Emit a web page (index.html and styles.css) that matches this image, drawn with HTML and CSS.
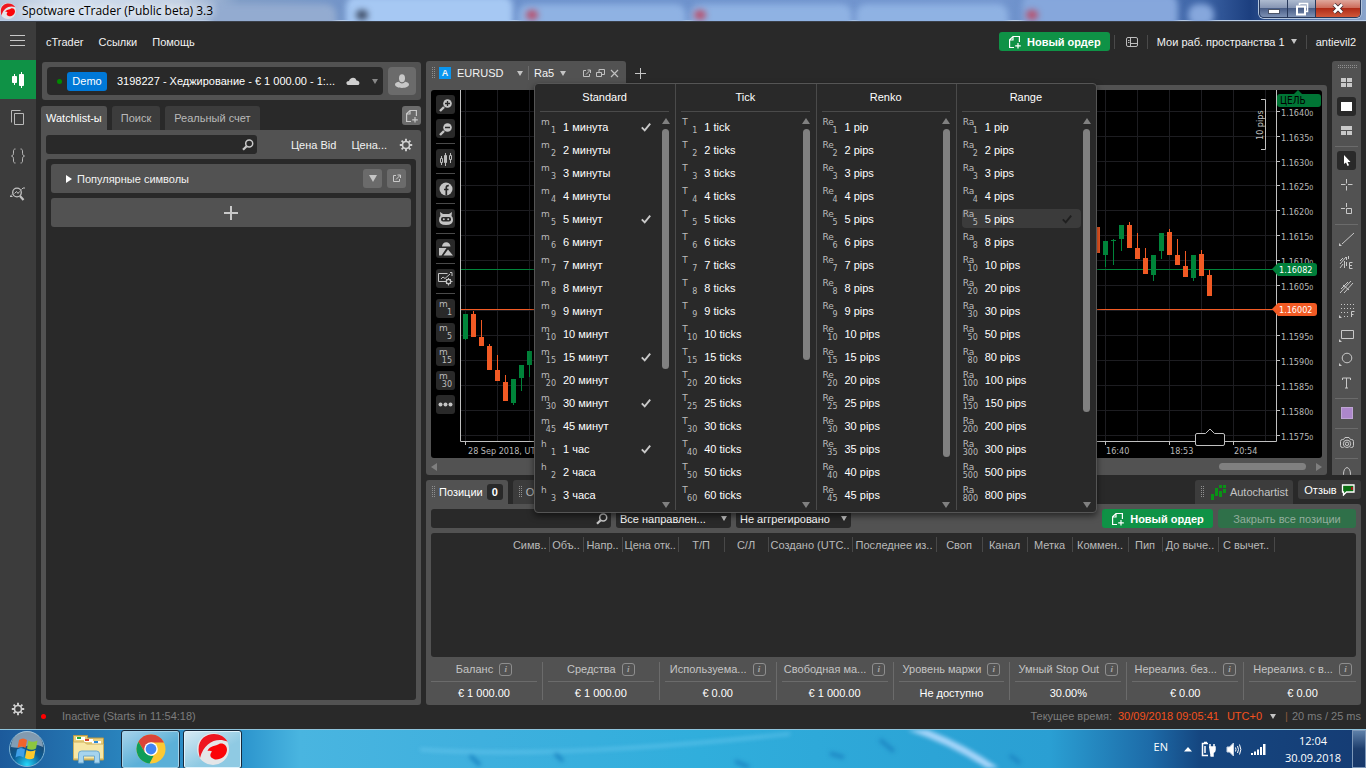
FILE: index.html
```html
<!DOCTYPE html>
<html lang="ru">
<head>
<meta charset="utf-8">
<title>Spotware cTrader (Public beta) 3.3</title>
<link rel="stylesheet" href="styles.css">
</head>
<body>
<svg class="defs" width="0" height="0" aria-hidden="true">
  <defs>
    <symbol id="search" viewBox="0 0 12 12"><circle cx="7.2" cy="4.6" r="3.5" fill="none" stroke="currentColor" stroke-width="1.5"/><path d="M4.6 7.2L1 10.8" stroke="currentColor" stroke-width="2.2"/></symbol>
    <symbol id="gear" viewBox="0 0 14 14"><g stroke="currentColor" fill="none"><circle cx="7" cy="7" r="3.5" stroke-width="1.6"/><path stroke-width="1.9" d="M7 .8v2.4M7 10.8v2.4M.8 7h2.4M10.8 7h2.4M2.6 2.6l1.7 1.7M9.7 9.7l1.7 1.7M2.6 11.4l1.7-1.7M9.7 4.3l1.7-1.7"/></g></symbol>
    <symbol id="newdoc" viewBox="0 0 14 14"><path fill="none" stroke="currentColor" stroke-width="1.2" d="M6 12.5H1.6V4.800L5 1.500h6.400V7M1.600 5H5V1.500M10 8v5.600M7.200 10.800h5.600"/></symbol>
    <symbol id="popout" viewBox="0 0 9 9"><path fill="none" stroke="currentColor" d="M4 1.5H1.5v6h6V5M5.5 1h3v3M8.300 1.200L4 5.500"/></symbol>
    <symbol id="check" viewBox="0 0 10 10"><path fill="none" stroke="currentColor" stroke-width="1.900" d="M.8 5.400l2.900 2.900L9.200 1.600"/></symbol>
    <symbol id="cball" viewBox="0 0 32 32"><circle cx="16" cy="16" r="16" fill="#e4e6e8"/><path fill="#ee1620" d="M3 25C-2 9 7 1 17 1c6 0 11 3 13.500 7.500C20 4 7 9 3 25z"/><path fill="#fb0408" d="M10.500 18C13 12 18 14 23 10.500c4-.5 7 2 7 6.500-.5 6-6 10-12 9.500C13 25 12 22 15 18.500c-1-1-3-1-4.500-.5z"/></symbol>
  </defs>
</svg>

<header class="titlebar">
  <span class="blur-tab t1"></span><span class="blur-tab t2"></span><span class="blur-tab t3"></span><span class="blur-tab t4"></span><span class="blur-tab t5"></span><span class="blur-tab t6"></span><span class="blur-tab t7"></span>
  <span class="blob b1"></span><span class="blob red b2"></span><span class="blob red b3"></span><span class="blob red b4"></span>
  <svg class="app-logo" width="16" height="16"><use href="#cball"/></svg>
  <span class="app-title">Spotware cTrader (Public beta) 3.3</span>
  <div class="win-buttons">
    <button class="win" aria-label="Свернуть"><svg width="14" height="12"><rect x="1.5" y="6.5" width="11" height="4" fill="#fff" stroke="#4c5568"/></svg></button>
    <button class="win" aria-label="Развернуть"><svg width="14" height="14" fill="none" stroke="#fff" stroke-width="1.6"><path d="M4.5 3V1.5h8v8H11"/><path d="M2 4.5h8v8H2z" stroke-width="2"/></svg></button>
    <button class="win close" aria-label="Закрыть"><svg width="12" height="11"><path d="M2 1.5l8 8M10 1.5l-8 8" stroke="#3d2a30" stroke-width="4.2"/><path d="M2 1.5l8 8M10 1.5l-8 8" stroke="#fff" stroke-width="2.6"/></svg></button>
  </div>
</header>

<div class="app">
  <nav class="rail">
    <button class="rail-btn menu" aria-label="Меню"><svg width="16" height="12" stroke="#c8c8c8"><path d="M0 .5h15M0 5.5h15M0 10.5h15"/></svg></button>
    <button class="rail-btn active" aria-label="Торговля"><svg width="14" height="18" fill="#fff" stroke="#fff"><path d="M3.5 3v11M10.5 1v16" stroke-width="1"/><path d="M1.5 5.500h4v6h-4zM8.500 3.500h4v11h-4z"/></svg></button>
    <button class="rail-btn" aria-label="Копирование"><svg width="14" height="16" fill="none" stroke="#b9b9b9"><path d="M3.500 3.500h9v11h-9zM.5 12.500V.5h9"/></svg></button>
    <button class="rail-btn" aria-label="Автоматизация"><svg width="14" height="16" fill="none" stroke="#b9b9b9"><path d="M4.500 1C2.500 1 2.500 2 2.500 4c0 3-.5 3.500-2 4 1.500.5 2 1 2 4 0 2 0 3 2 3M9.500 1c2 0 2 1 2 3 0 3 .5 3.500 2 4-1.500.5-2 1-2 4 0 2 0 3-2 3"/></svg></button>
    <button class="rail-btn" aria-label="Анализ"><svg width="16" height="14" fill="none" stroke="#c2c2c2"><circle cx="7" cy="5.500" r="4.300" stroke-width="1.300"/><path d="M10 9l3.500 4" stroke-width="2.200"/><path d="M4.500 6.500l2-2 1.500 2 1.500-2M0 9.500h2.500M11.500 2.500l1.500-1.500h2M0 9.500l2-2"/></svg></button>
    <button class="rail-btn bottom" aria-label="Настройки"><svg width="14" height="14" color="#d0d0d0"><use href="#gear"/></svg></button>
  </nav>

  <div class="main">
    <div class="menubar">
      <a href="#">cTrader</a><a href="#">Ссылки</a><a href="#">Помощь</a>
      <div class="menubar-right">
        <button class="btn-green"><svg width="14" height="14"><use href="#newdoc"/></svg>Новый ордер</button>
        <span class="vsep"></span>
        <button class="plain layout" aria-label="Панели"><svg width="12" height="12" fill="none" stroke="#bdbdbd"><rect x=".5" y="1.500" width="11" height="9" rx="1.500"/><path d="M4.500 2v8M4.500 7.500h7M2 4.500h1.500M2 6.500h1.500"/></svg></button>
        <span class="vsep"></span>
        <button class="plain workspace">Мои раб. пространства 1<i class="tri"></i></button>
        <span class="vsep"></span>
        <a href="#" class="user">antievil2</a>
      </div>
    </div>

    <div class="content">
      <aside class="left">
        <div class="account">
          <button class="account-box"><i class="dot green"></i><b class="demo">Demo</b><span class="acc-text">3198227 - Хеджирование - € 1 000.00 - 1:...</span>
            <svg width="14" height="8" fill="#cfcfcf"><path d="M2 8C-.5 7 0 4 3 4c.5-3 6-5 7.500-.5C13 3.500 14.500 6 12.500 8z"/></svg><i class="tri dim"></i></button>
          <button class="avatar" aria-label="Профиль"><svg width="14" height="15" fill="#c8c8c8"><ellipse cx="7" cy="4.300" rx="3" ry="4"/><path d="M0 10.500C0 8.500 2.500 8 4 7.800c1.500 2.200 4.500 2.200 6 0 1.500.2 4 .7 4 2.700 0 4.500-14 4.500-14 0z"/></svg></button>
        </div>
        <div class="tabs">
          <button class="tab on">Watchlist-ы</button><button class="tab">Поиск</button><button class="tab">Реальный счет</button>
          <button class="sq light new-list" aria-label="Новый список"><svg width="14" height="14"><use href="#newdoc"/></svg></button>
        </div>
        <section class="watch">
          <div class="watch-head">
            <label class="search"><input type="text" aria-label="Поиск символа"><svg width="12" height="12"><use href="#search"/></svg></label>
            <span class="bid">Цена Bid</span><span class="ask">Цена...</span>
            <button class="plain" aria-label="Настройки списка"><svg width="14" height="14" color="#d0d0d0"><use href="#gear"/></svg></button>
          </div>
          <div class="watch-body">
            <div class="group"><i class="tri east"></i><span>Популярные символы</span>
              <button class="sq light" aria-label="Меню списка"><i class="tri"></i></button>
              <button class="sq light" aria-label="Открепить"><svg width="9" height="9"><use href="#popout"/></svg></button></div>
            <button class="add" aria-label="Добавить"><svg width="16" height="16" stroke="#c9c9c9" stroke-width="2"><path d="M8 1v14M1 8h14"/></svg></button>
          </div>
        </section>
      </aside>

      <div class="workarea">
        <div class="upper">
          <section class="chart-area">
            <div class="chart-tabs">
              <div class="chart-tab">
                <i class="grip"></i><b class="link-a">A</b>
                <button class="plain sym">EURUSD<i class="tri"></i></button><span class="vsep"></span>
                <button class="plain period">Ra5<i class="tri"></i></button>
                <span class="tab-tools">
                  <button class="plain" aria-label="Открепить"><svg width="9" height="9"><use href="#popout"/></svg></button>
                  <button class="plain" aria-label="Дублировать"><svg width="9" height="9" fill="none" stroke="currentColor"><path d="M3 3V.5h5.500v5H6M.5 3.500h5v4h-5z"/></svg></button>
                  <button class="plain" aria-label="Закрыть"><svg width="9" height="9" stroke="currentColor" stroke-width="1.200"><path d="M1 1l7 7M8 1L1 8"/></svg></button>
                </span>
              </div>
              <button class="plain plus" aria-label="Новая вкладка"><svg width="11" height="11" stroke="#c6c6c6"><path d="M5.500 0v11M0 5.500h11"/></svg></button>
            </div>
            <div class="chart-frame">
              <div class="chart">
                <div class="chart-tools">
                  <button class="sq" aria-label="Увеличить"><svg width="14" height="14"><circle cx="8.500" cy="5.500" r="4.300" fill="#c4c4c4"/><path d="M5 9l-4 4" stroke="#c4c4c4" stroke-width="2.400"/><path d="M8.500 3v5M6 5.500h5" stroke="#292929" stroke-width="1.300"/></svg></button>
                  <button class="sq" aria-label="Уменьшить"><svg width="14" height="14"><circle cx="8.500" cy="5.500" r="4.300" fill="#c4c4c4"/><path d="M5 9l-4 4" stroke="#c4c4c4" stroke-width="2.400"/><path d="M6 5.500h5" stroke="#292929" stroke-width="1.300"/></svg></button>
                  <hr>
                  <button class="sq" aria-label="Тип графика"><svg width="14" height="14" fill="none" stroke="#bcbcbc"><path d="M2.500 4v2M2.500 11v2M6.500 1v13M11.500 1v2M11.500 8v3M1.500 6.500h2v4h-2zM10.500 3.500h2v4h-2z"/><path fill="#bcbcbc" d="M5.500 3.500h2v7h-2z"/></svg></button>
                  <hr>
                  <button class="sq" aria-label="Facebook"><svg width="14" height="14"><circle cx="7" cy="7" r="6.500" fill="#c4c4c4"/><path d="M7.300 13.500V5.500q0-2 2.500-1.800M5 7.500h4.500" fill="none" stroke="#292929" stroke-width="1.700"/></svg></button>
                  <hr>
                  <button class="sq" aria-label="Роботы"><svg width="14" height="13"><path fill="#c4c4c4" d="M1 0l3 2h6l3-2-.5 4q1.500 1 1.500 4 0 5-7 5T0 8q0-3 1.500-4z"/><rect x="2" y="5" width="10" height="4.500" rx="2" fill="#292929"/><circle cx="4.800" cy="7.200" r="1" fill="#c4c4c4"/><circle cx="9.200" cy="7.200" r="1" fill="#c4c4c4"/></svg></button>
                  <hr>
                  <button class="sq" aria-label="Объекты"><svg width="14" height="14" fill="#c4c4c4"><path d="M3 4.500a4 4 0 0 1 8.500 0zM0 6h7.500L2.500 13.500H0zM9 7.500l5 6H4.500z"/></svg></button>
                  <hr>
                  <button class="sq" aria-label="Настройки графика"><svg width="15" height="14" fill="none" stroke="#c4c4c4"><path d="M7 9.500H.5v-8h9M3 7l2-2 2 1.500L12 2M12 .5h2V4"/><circle cx="10.500" cy="9.500" r="2.200" stroke-width="1.300"/><path d="M10.500 6v1M10.500 12v1.500M7 9.500h1M13 9.500h1.500M8 7l1 1M13 7l-1 1M8 12l1-1M13 12l-1-1"/></svg></button>
                  <hr>
                  <button class="sq unit">m<sub>1</sub></button>
                  <button class="sq unit">m<sub>5</sub></button>
                  <button class="sq unit">m<sub>15</sub></button>
                  <button class="sq unit">m<sub>30</sub></button>
                  <button class="sq" aria-label="Ещё"><svg width="15" height="5" fill="#c4c4c4"><circle cx="2.500" cy="2.500" r="2"/><circle cx="7.500" cy="2.500" r="2"/><circle cx="12.500" cy="2.500" r="2"/></svg></button>
                </div>
                <svg class="plot" viewBox="460 90 862 368" preserveAspectRatio="xMaxYMin meet" role="img" aria-label="График EURUSD">
                  <path class="grid" id="grid"/>
                  <path stroke="#00843a" d="M460 269.500H1274"/>
                  <path stroke="#f15a24" d="M460 309.500H1274"/>
                  <g id="candles"></g>
                  <path class="axis" d="M460.500 90V441.500H1276.500V90"/>
                  <path class="axis" id="ticks"/>
                  <g class="tick-text" id="prices"></g>
                  <g class="tick-text"><text x="468" y="454">28 Sep 2018, UTC</text><text x="1106" y="454">16:40</text><text x="1170" y="454">18:53</text><text x="1234" y="454">20:54</text></g>
                  <path class="axis" d="M1261 99.500h4.500v50H1261"/>
                  <text class="pips" transform="translate(1263 140) rotate(-90)">10 pips</text>
                  <path fill="#007535" d="M1298 90l4 4h16q3 0 3 3v7q0 3-3 3h-38q-3 0-3-3v-7q0-3 3-3h14z"/>
                  <text class="target" x="1280" y="104">ЦЕЛЬ</text>
                  <path fill="#007f3a" d="M1272 269l6-6h36q3 0 3 3v7q0 3-3 3h-36z"/>
                  <text class="tag" x="1279" y="273">1.16082</text>
                  <path fill="#f15a24" d="M1272 309l6-6h36q3 0 3 3v7q0 3-3 3h-36z"/>
                  <text class="tag" x="1279" y="313">1.16002</text>
                  <path fill="#000" stroke="#c0c0c0" d="M1195.500 435q0-1.500 1.500-1.500h8.500l4.500-4.500 4.500 4.500h8.500q1.500 0 1.500 1.500v9q0 1.500-1.500 1.500h-26q-1.500 0-1.500-1.500z"/>
                </svg>
              </div>
              <div class="hscroll"><i class="arrow-l"></i><i class="thumb"></i><i class="arrow-r"></i></div>
            </div>
          </section>

          <div class="draw-tools">
            <i class="grip-h"></i>
            <button aria-label="Мозаика"><svg width="12" height="10" fill="#c9c9c9"><path d="M0 0h5v4H0zM6 0h5v4H6zM0 5h5v4H0zM6 5h5v4H6z"/></svg></button>
            <button class="on" aria-label="Одно окно"><svg width="12" height="10"><rect width="11" height="9" fill="#fff"/></svg></button>
            <button aria-label="Свободно"><svg width="12" height="10" fill="#c9c9c9"><path d="M0 0h11v4H0zM0 5h5v4H0zM6 5h5v4H6z"/></svg></button>
            <hr>
            <button class="on" aria-label="Курсор"><svg width="8" height="12" fill="#fff"><path d="M1 0v9l2-1.500L4.500 11l1.500-.7L4.600 7H7.500z"/></svg></button>
            <button aria-label="Перекрестие"><svg width="12" height="12" stroke="#c9c9c9"><path d="M5.500 0v4.500M5.500 7v4.500M0 5.500h4.500M7 5.500h4.500"/></svg></button>
            <button aria-label="Перекрестие с объектом"><svg width="12" height="12" stroke="#c9c9c9" fill="none"><path d="M5.500 0v4M0 5.500h4M5.500 5.500h5v5h-5z"/></svg></button>
            <hr>
            <button aria-label="Линия"><svg width="16" height="16" stroke="#c9c9c9"><path d="M3 13L15 2"/><path d="M0 12v3h3z" fill="#c9c9c9" stroke="none"/></svg></button>
            <button aria-label="Волны"><svg width="15" height="15" stroke="#c9c9c9" fill="none"><path d="M1 9l6-7M1 13l3-4M5.500 6v7M7.500 2v3M7.500 7v4M9.500 4V1M1 6l3-3M13.500 7.500h-3v6h3M10.500 10.500h2.500"/></svg></button>
            <button aria-label="Вилы"><svg width="14" height="14" stroke="#c9c9c9"><path d="M0 13L11 1M4 13L13 3M1 9l7-7M3 5l6 5"/></svg></button>
            <button aria-label="Фибоначчи"><svg width="16" height="16" stroke="#c9c9c9" fill="none"><path stroke-dasharray="1 2" d="M2 1.500h13M2 5.500h13M2 9.500h8M5 13.500h6"/><path d="M12.500 14V8.500h3M12.500 11.500h2"/><path d="M0 12v3h3z" fill="#c9c9c9" stroke="none"/></svg></button>
            <button aria-label="Прямоугольник"><svg width="16" height="16" stroke="#c9c9c9" fill="none"><path d="M2.500 3.500h12v8h-12z"/><path d="M0 12v3h3z" fill="#c9c9c9" stroke="none"/></svg></button>
            <button aria-label="Эллипс"><svg width="16" height="16" stroke="#c9c9c9" fill="none"><circle cx="8" cy="7" r="4.800"/><path d="M0 12v3h3z" fill="#c9c9c9" stroke="none"/></svg></button>
            <button aria-label="Текст"><svg width="10" height="12" stroke="#c9c9c9" fill="none"><path d="M.5 3V1h8v2M4.500 1v10M3 11h3"/></svg></button>
            <hr>
            <button aria-label="Цвет"><i class="swatch"></i></button>
            <hr>
            <button aria-label="Снимок"><svg width="14" height="12" stroke="#c9c9c9" fill="none"><path d="M3.500 10.500h-1Q.5 10.500.5 8.500v-4Q.5 2.500 2.500 2.500h1l1.500-2h4l1.500 2h1q2 0 2 2v4q0 2-2 2h-1"/><circle cx="7" cy="6.800" r="3.700"/><circle cx="7" cy="6.800" r="1.700"/></svg></button>
            <hr>
            <button aria-label="Оповещение"><svg width="12" height="14" stroke="#c9c9c9" fill="none"><path d="M1 12.500q1.500-1 1.500-4Q2.500 2.500 6 1.500q3.500 1 3.500 7 0 3 1.500 4"/></svg></button>
          </div>
        </div>

        <section class="lower">
          <div class="lower-tabs">
            <button class="tab on"><i class="grip"></i>Позиции<b class="count">0</b></button>
            <button class="tab"><i class="grip"></i>Ордера</button>
            <button class="tab auto"><i class="grip"></i><svg width="15" height="15" fill="#0a9216"><path d="M0 9h3v6H0zM4 3h3v8H4zM8 6h3v6H8zM8 0h3v3H8zM12 0h3v3h-3zM12 4h3v4h-3z"/></svg>Autochartist</button>
            <button class="feedback">Отзыв<svg width="14" height="12"><path d="M1.500 1h11.500v7H5.500l-3 3V8h-1z" fill="#0a6e12" stroke="#fff" stroke-width="1.300"/><path d="M11 3v3" stroke="#a01818" stroke-width="2"/></svg></button>
          </div>
          <div class="lower-panel">
            <div class="filters">
              <label class="search"><input type="text" aria-label="Поиск позиции"><svg width="12" height="12"><use href="#search"/></svg></label>
              <label class="select"><select aria-label="Направление"><option>Все направлен...</option></select><i class="tri"></i></label>
              <label class="select"><select aria-label="Агрегация"><option>Не аггрегировано</option></select><i class="tri"></i></label>
              <button class="btn-green push"><svg width="14" height="14"><use href="#newdoc"/></svg>Новый ордер</button>
              <button class="btn-green off">Закрыть все позиции</button>
            </div>
            <div class="table-box">
              <table>
                <colgroup><col class="w118"><col class="w34"><col class="w39"><col class="w56"><col class="w46"><col class="w44"><col class="w84"><col class="w84"><col class="w46"><col class="w45"><col class="w45"><col class="w56"><col class="w34"><col class="w56"><col class="w56"><col></colgroup>
                <thead><tr><th>Симв..</th><th>Объ..</th><th>Напр..</th><th>Цена отк..</th><th>Т/П</th><th>С/Л</th><th>Создано (UTC..</th><th>Последнее из..</th><th>Своп</th><th>Канал</th><th>Метка</th><th>Коммен..</th><th>Пип</th><th>До выче..</th><th>С вычет..</th><td></td></tr></thead>
              </table>
            </div>
            <dl class="stats">
              <div><dt>Баланс<i>i</i></dt><dd>€ 1 000.00</dd></div>
              <div><dt>Средства<i>i</i></dt><dd>€ 1 000.00</dd></div>
              <div><dt>Используема...<i>i</i></dt><dd>€ 0.00</dd></div>
              <div><dt>Свободная ма...<i>i</i></dt><dd>€ 1 000.00</dd></div>
              <div><dt>Уровень маржи<i>i</i></dt><dd>Не доступно</dd></div>
              <div><dt>Умный Stop Out<i>i</i></dt><dd>30.00%</dd></div>
              <div><dt>Нереализ. без...<i>i</i></dt><dd>€ 0.00</dd></div>
              <div><dt>Нереализ. с в...<i>i</i></dt><dd>€ 0.00</dd></div>
            </dl>
          </div>
        </section>
        <div class="period-menu" id="period-menu"></div>
      </div>
    </div>

    <footer class="status">
      <i class="dot red"></i><span>Inactive (Starts in 11:54:18)</span>
      <span class="now">Текущее время:</span><span class="hot">30/09/2018 09:05:41</span>
      <button class="plain utc">UTC+0<i class="tri"></i></button>
      <span class="ping"><span class="bar">|</span>20 ms / 25 ms</span>
    </footer>
  </div>
</div>

<div class="taskbar">
  <svg class="streaks" viewBox="0 0 1366 39" preserveAspectRatio="none" fill="none"><path d="M900-6Q960 12 1010 52" stroke="#a9d6fa" stroke-width="7"/><path d="M420 20Q560 30 790 4" stroke="#6cc9ef" stroke-width="2"/><path d="M120 50L165-10" stroke="#4aa5d4" stroke-width="6"/><path d="M470 26l10 10M555 24l8 8M735 32l14 6M880 10l14 12M1010 26l10 8M830 24l14 4" stroke="#1d87c4" stroke-width="4"/></svg>
  <button class="start" aria-label="Пуск"><svg width="38" height="38"><defs><radialGradient id="orb" cx=".5" cy=".95" r=".9"><stop offset="0" stop-color="#25d8fa"/><stop offset=".45" stop-color="#0b5c96"/><stop offset="1" stop-color="#223f5e"/></radialGradient></defs><circle cx="19" cy="19" r="17.500" fill="url(#orb)" stroke="#7db4d6"/><path fill="#b8cbd8" opacity=".65" d="M3 17a16 16 0 0 1 32 0q-8-4-16-1T3 17z"/><path fill="#f0642c" d="M11 10q4-3 8 0l-1.500 8q-4-3-8 0z"/><path fill="#8cc63f" d="M20.500 10.500q4 2.500 9 0L28 18.500q-4 2.500-9 0z"/><path fill="#3f9fe8" d="M9 19.500q4-3 8 0l-1.500 8q-4-3-8 0z"/><path fill="#fcc92c" d="M18.500 20q4 2.500 9 0L26 28q-4 2.500-9 0z"/></svg></button>
  <button class="task" aria-label="Проводник"><svg width="34" height="32"><path fill="#e9cf7c" stroke="#b99a45" d="M1.500 5V2.500h14V5h16v22h-30z"/><path fill="#fff" d="M4 4h9v3H4zM12 6h9v3h-9zM20 8h9v3h-9z"/><path fill="#23a83c" d="M5 4h4v2H5z"/><path fill="#d8402a" d="M13 6h4v2h-4z"/><path fill="#2a8ad8" d="M22 8h4v2h-4z"/><path fill="#f7e7a6" stroke="#cdb05c" d="M1.500 9h11l2 2h17v15h-30z"/><path fill="#a6d4ee" stroke="#6fa8cc" d="M6.500 30V21q0-3 3-3h15q3 0 3 3v9h-5v-7h-11v7z"/></svg></button>
  <button class="task open" aria-label="Chrome"><svg width="30" height="30"><circle cx="15" cy="15" r="14.500" fill="#fcc934"/><path fill="#db4437" d="M2.400 7.800A14.500 14.500 0 0 1 28 8.500H15L8.700 18z"/><path fill="#0f9d58" d="M2.400 7.800L9 18.500l6 3.500h2.500L13.500 29.500A14.500 14.500 0 0 1 2.400 7.800z"/><circle cx="15" cy="15" r="6.800" fill="#fff"/><circle cx="15" cy="15" r="5.400" fill="#4285f4"/></svg></button>
  <button class="task open front" aria-label="cTrader"><svg width="32" height="32"><use href="#cball"/></svg></button>
  <div class="tray">
    <span class="lang">EN</span>
    <svg width="8" height="5" fill="#fff"><path d="M4 0l4 4.500H0z"/></svg>
    <svg width="16" height="17" fill="none" stroke="#fff" stroke-width="1.500"><path d="M7 14.500H1.500v-12H7M3 1.500h3M4 5v7"/><path fill="#fff" d="M8 6h6v3q0 2-2 2.500V15H9.500M9 3v3M13 3v3M10 11V8"/></svg>
    <svg width="16" height="15"><path fill="#fff" stroke="#c8d4e4" d="M1 5h2.500l4-4v13l-4-4H1z"/><path fill="none" stroke="#fff" d="M9.500 5.500q1 2 0 4M11.500 4q2 3.500 0 7M13.500 2.500q2.700 5 0 10"/></svg>
    <svg width="16" height="13" fill="#fff"><path d="M0 10h2v2H0zM3 8.500h2V12H3zM6 6.500h2V12H6zM9 4h2v8H9zM12 1h2.500v11H12z"/></svg>
    <time class="clock">12:04<br>30.09.2018</time>
  </div>
  <button class="show-desktop" aria-label="Свернуть все окна"></button>
</div>
<script src="app.js"></script>
</body>
</html>
```
FILE: styles.css
```css
* { box-sizing: border-box; }
body { margin: 0; height: 100vh; display: flex; flex-direction: column; overflow: hidden; background: #292929; color: #f2f2f2; font: 11px/14px "Liberation Sans", Arial, sans-serif; }
button { font: inherit; color: inherit; border: 0; padding: 0; margin: 0; background: none; display: inline-flex; align-items: center; justify-content: center; white-space: nowrap; }
a { color: inherit; text-decoration: none; white-space: nowrap; }
i { font-style: normal; }
svg { flex: none; }
hr { border: 0; height: 1px; margin: 0; background: #4a4a4a; align-self: stretch; flex: none; }
.defs { position: absolute; }

/* window title */
.titlebar { flex: none; position: relative; height: 22px; display: flex; align-items: center; overflow: hidden; border-bottom: 1px solid #3a3f48; box-shadow: inset 0 -1px #b9cde6; background: linear-gradient(90deg, #b4c4da 0, #d3dfee 60px, #c3d1e4 180px, #7f9cc6 240px, #6a8fca 420px, #7396cf 1000px, #3f66a8 1200px, #1c3f7f 1250px, #8aa4cb 100%); }
.blur-tab { position: absolute; height: 36px; border-radius: 10px; filter: blur(3px); background: #a6c8f3; }
.t1 { left: 210px; right: 1030px; top: 4px; background: #93abd0; }
.t2 { left: 346px; right: 853px; top: -4px; }
.t3 { left: 518px; right: 680px; top: 4px; background: #8fb2e3; }
.t4 { left: 690px; right: 514px; top: 4px; background: #8fb2e3; }
.t5 { left: 856px; right: 358px; top: 4px; background: #8fb2e3; }
.t6 { left: 1022px; right: 188px; top: -6px; background: #86a7dc; }
.t7 { left: 1188px; right: 152px; top: 4px; height: 22px; background: #86a7dc; }
.blob { position: absolute; top: 10px; width: 12px; height: 10px; border-radius: 5px; filter: blur(3px); background: #3d4c66; }
.blob.red { background: #b8506c; }
.b1 { left: 356px; } .b2 { left: 526px; } .b3 { left: 694px; } .b4 { left: 1026px; }
.app-logo { position: relative; margin: 0 6px 0 0; }
.app-title { position: relative; color: #000; font: 12px/20px "Open Sans", "Noto Sans", sans-serif; text-shadow: 0 0 8px #fff, 0 0 8px #fff; }
.win-buttons { position: relative; display: flex; margin: 0 5px 0 auto; align-self: flex-start; height: 18px; border: 1px solid #27385a; border-top: 0; border-radius: 0 0 5px 5px; overflow: hidden; box-shadow: 0 0 0 1px #b4c6de; }
.win { width: 28px; background: linear-gradient(#aebbd0, #8796b4 45%, #4b5f88 50%, #7d91b4); border-right: 1px solid #27385a; }
.win.close { width: 44px; border: 0; background: linear-gradient(#dfa79c, #cd6d5c 45%, #b02c18 50%, #d0583a); }

.app { flex: 1; min-height: 0; display: flex; }
.rail { width: 36px; flex: none; background: #3c3c3c; display: flex; flex-direction: column; }
.rail-btn { height: 38px; }
.rail-btn.active { height: 39px; background: #0f9246; }
.rail-btn.bottom { margin-top: auto; height: 40px; }
.main { flex: 1; min-width: 0; display: flex; flex-direction: column; }

.menubar { height: 39px; flex: none; display: flex; align-items: center; gap: 15px; padding: 0 10px; }
.menubar-right { margin-left: auto; display: flex; align-items: center; gap: 9px; }
.menubar-right .btn-green { margin-right: -5px; }
.layout { margin-left: 2px; }
.vsep { width: 1px; height: 14px; background: #4a4a4a; flex: none; }
.btn-green { height: 19px; width: 111px; gap: 5px; border-radius: 3px; background: #0f9246; color: #fff; font-weight: bold; }
.btn-green.off { width: 138px; background: #2f7049; color: #93ad9d; font-weight: normal; }
.tri { width: 0; height: 0; flex: none; border: 3px solid transparent; border-top: 5px solid #c4c4c4; border-bottom: 0; margin-left: 6px; }
.tri.dim { border-top-color: #888; }
.tri.east { border: 4px solid transparent; border-left: 6px solid #fff; border-right: 0; margin: 0; }

.content { flex: 1; min-height: 0; display: flex; gap: 5px; padding: 0 5px; }
.left { width: 380px; flex: none; display: flex; flex-direction: column; padding-top: 1px; }
.account { display: flex; gap: 5px; padding: 5px; margin: 0 0 6px 1px; background: #525252; border-radius: 3px; }
.account-box { flex: 1; height: 28px; background: #292929; border-radius: 4px; justify-content: flex-start; padding: 0 5px 0 10px; color: #fff; }
.account-box .tri { margin-left: 12px; }
.dot { width: 5px; height: 5px; border-radius: 3px; flex: none; }
.dot.green { background: #008a00; }
.dot.red { background: #f00; }
.demo { width: 40px; height: 19px; line-height: 19px; margin: 0 10px 0 5px; border-radius: 3px; background: #0078d7; font-weight: normal; }
.acc-text { flex: 1; text-align: left; }
.avatar { width: 28px; height: 28px; background: #6b6b6b; border-radius: 4px; }
.tabs { display: flex; gap: 5px; height: 24px; }
.tab { padding: 0 9px; background: #3c3c3c; color: #b9b9b9; border-radius: 3px 3px 0 0; }
.tab.on { background: #525252; color: #fff; padding: 0 5px; }
.sq { width: 19px; height: 19px; flex: none; border-radius: 3px; background: #292929; color: #c9c9c9; }
.sq.light { background: #6b6b6b; }
.sq .tri { margin: 0; border-width: 7px 4px 0; }
.new-list { margin-left: auto; }
.watch { flex: 1; min-height: 0; display: flex; flex-direction: column; gap: 5px; padding: 5px; background: #525252; border-radius: 0 3px 3px 3px; }
.watch-head { display: flex; align-items: center; height: 19px; }
.search { display: flex; align-items: center; height: 19px; background: #292929; border-radius: 3px; color: #c9c9c9; padding-right: 3px; }
.search input { flex: 1; min-width: 0; width: 100%; border: 0; padding: 0 5px; background: none; color: inherit; font: inherit; outline: 0; }
.watch .search { width: 211px; }
.bid { margin-left: auto; }
.ask { margin: 0 12px 0 15px; }
.watch-head .plain { margin-right: 3px; }
.watch-body { flex: 1; background: #292929; border-radius: 3px; padding: 5px; display: flex; flex-direction: column; gap: 5px; }
.group, .add { height: 29px; background: #525252; border-radius: 3px; }
.group { display: flex; align-items: center; gap: 5px; padding: 0 5px 0 15px; }
.group span { flex: 1; }

.workarea { flex: 1; min-width: 0; display: flex; flex-direction: column; position: relative; }
.upper { flex: 1; min-height: 0; display: flex; gap: 5px; }
.chart-area { flex: 1; min-width: 0; display: flex; flex-direction: column; }
.chart-tabs { height: 24px; display: flex; align-items: center; gap: 9px; }
.chart-tab { width: 200px; height: 24px; display: flex; align-items: center; background: #525252; border-radius: 3px 3px 0 0; padding: 0 7px 0 5px; }
.chart-tab .vsep { background: #6b6b6b; }
.grip, .grip-h { flex: none; background: conic-gradient(#8f8f8f 25%, transparent 0) 0 0 / 2px 2px; }
.grip { width: 4px; height: 12px; }
.grip-h { width: 20px; height: 4px; margin: 4px 0 2px; }
.link-a { width: 12px; height: 12px; margin: 0 6px 0 4px; background: #0a96f0; font: bold 9px/12px "Liberation Sans", sans-serif; text-align: center; }
.sym { width: 66px; margin-right: 5px; justify-content: space-between; }
.period { margin-left: 5px; }
.tab-tools { margin-left: auto; display: flex; gap: 5px; color: #c0c0c0; }
.chart-frame { flex: 1; min-height: 0; background: #525252; border-radius: 0 3px 3px 3px; padding: 5px 5px 0; display: flex; flex-direction: column; }
.chart { flex: 1; min-height: 0; display: flex; background: #000; border-radius: 3px; overflow: hidden; }
.chart-tools { width: 29px; flex: none; display: flex; flex-direction: column; align-items: flex-start; gap: 5px; padding: 5px; }
.chart-tools hr { width: 19px; align-self: flex-start; }
.unit { display: grid; grid-template: 8px 9px / 1fr; font: 9px/8px "DejaVu Sans", sans-serif; color: #bcbcbc; align-content: center; justify-items: start; text-align: left; }
.unit sub { justify-self: end; align-self: end; font-size: 8px; line-height: 8px; vertical-align: baseline; }
.sq.unit { padding: 0 3px; }
.plot { flex: 1; min-width: 0; width: 100%; height: 100%; }
.grid { stroke: #1d1d21; fill: none; }
.axis { stroke: #c0c0c0; fill: none; }
.tick-text { fill: #b8b8b8; font: 9px "DejaVu Sans Condensed", "DejaVu Sans", sans-serif; }
.pips { fill: #c0c0c0; font: 9px "DejaVu Sans Condensed", "DejaVu Sans", sans-serif; }
.target { fill: #000; font: 10px "DejaVu Sans Condensed", "DejaVu Sans", sans-serif; }
.tag { fill: #fff; font: 9px "DejaVu Sans Condensed", "DejaVu Sans", sans-serif; }
.hscroll { height: 17px; flex: none; display: flex; align-items: center; }
.hscroll .arrow-l, .hscroll .arrow-r { border: 4px solid transparent; }
.hscroll .arrow-l { border-right: 6px solid #7f7f7f; border-left: 0; }
.hscroll .arrow-r { border-left: 6px solid #7f7f7f; border-right: 0; }
.thumb { width: 87px; height: 7px; border-radius: 4px; background: #808080; margin: 0 10px 0 auto; }

.draw-tools { width: 29px; flex: none; background: #525252; border-radius: 3px 3px 0 0; display: flex; flex-direction: column; align-items: center; overflow: hidden; }
.draw-tools button { width: 19px; height: 19px; margin: 2px 0 3px; flex: none; border-radius: 3px; }
.draw-tools button.on { background: #292929; }
.draw-tools hr { margin: 3px 3px 2px; background: #6b6b6b; }
.swatch { width: 12px; height: 12px; background: #ad87cb; border: 1px solid #bfa5d4; }

/* time frame picker, laid over the chart */
.period-menu { position: absolute; z-index: 5; left: 108px; top: 22px; width: 563px; display: grid; grid-template-columns: repeat(4, 1fr); background: #292929; border: 1px solid #555; border-radius: 4px; box-shadow: 0 3px 6px #0008; padding: 0 0 2px; color: #fff; }
.pm-col { padding: 0 6px 0 5px; border-left: 1px solid #4a4a4a; }
.pm-col:first-child { border-left: 0; }
.pm-col h3 { margin: 0; font: inherit; line-height: 26px; height: 28px; text-align: center; border-bottom: 1px solid #4a4a4a; }
.pm-body { display: flex; gap: 2px; padding: 3px 0 2px; }
.pm-col ul { list-style: none; margin: 0; padding: 0 0 2px; flex: 1; }
.pm-col li { display: flex; height: 23px; padding: 2px 0; }
.pm-col li button { flex: 1; height: 19px; justify-content: flex-start; border-radius: 4px; padding: 0 9px 0 1px; gap: 7px; }
.pm-col .unit { width: 15px; height: 17px; }
.pm-col button svg { margin-left: auto; color: #c9c9c9; }
.pm-col button.sel { background: #3b3b3b; }
.pm-col button.sel svg { color: #1f1f1f; }
.vscroll { width: 7px; display: flex; flex-direction: column; align-items: center; }
.vscroll::before, .vscroll::after { content: ""; border: 4px solid transparent; }
.vscroll::before { border-bottom: 6px solid #808080; border-top: 0; margin: 3px 0 5px; }
.vscroll::after { border-top: 6px solid #808080; border-bottom: 0; margin: auto 0 0; }
.vscroll b { width: 7px; border-radius: 4px; background: #808080; }

.lower { flex: none; display: flex; flex-direction: column; padding-top: 5px; }
.lower-tabs { display: flex; gap: 5px; height: 24px; align-items: flex-start; }
.lower-tabs .tab { height: 24px; gap: 4px; padding: 0 5px; }
.count { width: 16px; height: 16px; line-height: 16px; text-align: center; border-radius: 3px; background: #292929; }
.lower-tabs .auto { margin-left: auto; color: #c4c4c4; }
.lower-tabs .auto svg { margin-left: 3px; }
.feedback { width: 63px; height: 19px; gap: 4px; border-radius: 3px; background: #3c3c3c; color: #fff; }
.lower-panel { background: #525252; border-radius: 0 3px 3px 3px; padding: 5px 5px 0; }
.filters { display: flex; gap: 5px; }
.filters .search { width: 180px; }
.select { position: relative; width: 115px; height: 19px; background: #292929; border-radius: 3px; }
.select select { width: 100%; height: 19px; appearance: none; border: 0; padding: 0 4px; background: none; color: #fff; font: inherit; outline: 0; }
.select .tri { position: absolute; right: 4px; top: 7px; pointer-events: none; }
.push { margin-left: auto; }
.table-box { height: 124px; margin-top: 5px; background: #292929; border-radius: 3px; padding-top: 4px; overflow: hidden; }
table { width: 100%; table-layout: fixed; border-collapse: collapse; }
th { height: 15px; padding: 0 2px; font-weight: normal; color: #b9b9b9; white-space: nowrap; border-right: 1px solid #484848; }
th:first-child { text-align: right; }
.w118 { width: 118px; } .w34 { width: 34px; } .w39 { width: 39px; } .w56 { width: 56px; } .w46 { width: 46px; } .w44 { width: 44px; } .w84 { width: 84px; } .w45 { width: 45px; }
.stats { margin: 0 -5px; height: 48px; display: grid; grid-template-columns: repeat(8, 1fr); padding: 5px 0; }
.stats div { padding: 0 5px; border-right: 1px solid #6b6b6b; min-width: 0; }
.stats div:last-child { border: 0; }
.stats dt { display: flex; justify-content: center; align-items: center; gap: 6px; height: 20px; padding-bottom: 5px; border-bottom: 1px solid #6b6b6b; color: #c4c4c4; white-space: nowrap; }
.stats dt i { width: 13px; height: 13px; border: 1px solid #8e8e8e; border-radius: 3px; font: italic bold 9px/11px "Liberation Serif", serif; text-align: center; color: #a8a8a8; }
.stats dd { margin: 4px 0 0; text-align: center; color: #fff; }

.status { height: 24px; flex: none; display: flex; align-items: center; padding: 0 5px 2px; color: #7d7d7d; white-space: nowrap; }
.status .dot { margin: 0 16px 0 0; }
.now { margin-left: auto; }
.hot { color: #f4511e; margin: 0 8px 0 6px; }
.utc { color: #f4511e; }
.utc .tri { margin-left: 8px; }
.ping { margin-left: 9px; }
.bar { color: #8a5a3c; margin-right: 4px; }

/* desktop taskbar */
.taskbar { position: relative; height: 39px; flex: none; display: flex; align-items: center; border-top: 1px solid #8fc4dc; overflow: hidden; font-family: "Open Sans", "Noto Sans", sans-serif; color: #fff; background: linear-gradient(90deg, #1c5a9b 0, #2a86bf 130px, #2b93cc 240px, #49b5e0 300px, #3fb0de 480px, #30aedc 700px, #2a9fd3 1050px, #1d6ba8 1150px, #154680 1200px, #153c74 100%); }
.streaks { position: absolute; inset: 0; width: 100%; height: 100%; filter: blur(2px); }
.start { position: relative; margin: 0 26px 0 8px; }
.task { position: relative; width: 59px; height: 39px; margin-right: 3px; border-radius: 3px; }
.start + .task { width: 34px; margin-right: 15px; }
.open { border: 1px solid #17293b; box-shadow: inset 0 0 0 1px #a5d4ea; background: linear-gradient(150deg, #a9d4ea, #5bb0d8 60%); }
.front { background: linear-gradient(150deg, #d8ebf4, #8fcae3 60%); box-shadow: inset 0 0 0 1px #dff2fb; }
.tray { position: relative; margin-left: auto; display: flex; align-items: center; gap: 9px; }
.lang { margin-right: 7px; font-size: 11px; line-height: 14px; padding-bottom: 4px; }
.clock { font-size: 11px; line-height: 17px; text-align: center; width: 66px; margin: 0 6px 0 4px; }
.show-desktop { position: relative; width: 14px; align-self: stretch; border: 1px solid #7d97b8; background: linear-gradient(#5d7fa8, #1d3d6c 50%, #17386b); }
```
FILE: app.js
```javascript
const ns = "http://www.w3.org/2000/svg";

// Columns of the time frame picker: [title, scroll thumb height, rows]
const seq = (unit, word, list) => list.map(n => [unit, n, n + " " + (n === 1 ? word.replace(/s$/, "") : word)]);
const minutes = [1, 2, 3, 4, 5, 6, 7, 8, 9, 10, 15, 20, 30, 45].map(n => ["m", n, n + (n === 1 ? " минута" : n < 5 ? " минуты" : " минут")]);
const columns = [
  ["Standard", 240, [...minutes, ["h", 1, "1 час"], ["h", 2, "2 часа"], ["h", 3, "3 часа"]]],
  ["Tick", 231, seq("T", "ticks", [1, 2, 3, 4, 5, 6, 7, 8, 9, 10, 15, 20, 25, 30, 40, 50, 60])],
  ["Renko", 328, seq("Re", "pips", [1, 2, 3, 4, 5, 6, 7, 8, 9, 10, 15, 20, 25, 30, 35, 40, 45])],
  ["Range", 283, seq("Ra", "pips", [1, 2, 3, 4, 5, 8, 10, 20, 30, 50, 80, 100, 150, 200, 300, 500, 800])]
];
const checked = new Set(["1 минута", "5 минут", "15 минут", "30 минут", "1 час"]);

document.getElementById("period-menu").innerHTML = columns.map(([title, thumb, rows]) => `
  <div class="pm-col"><h3>${title}</h3><div class="pm-body"><ul>${rows.map(([unit, n, label]) => {
    const selected = title === "Range" && n === 5;
    const mark = selected || checked.has(label) ? '<svg width="10" height="10"><use href="#check"/></svg>' : "";
    return `<li><button class="${selected ? "sel" : ""}"><i class="unit">${unit}<sub>${n}</sub></i>${label}${mark}</button></li>`;
  }).join("")}</ul><div class="vscroll"><b style="height:${thumb}px"></b></div></div></div>`).join("");

// Grid, ticks and price labels
const xs = Array.from({ length: 26 }, (_, i) => 465.5 + 32 * i);
const ys = [111.5, 136.5, 161.5, 185.5, 210.5, 235.5, 260.5, 285.5, 310.5, 335.5, 360.5, 385.5, 410.5, 435.5];
document.getElementById("grid").setAttribute("d", xs.map(x => `M${x} 90V441`).join("") + ys.map(y => `M460 ${y}H1276`).join(""));
document.getElementById("ticks").setAttribute("d", ys.map(y => `M1277 ${y}h3`).join("") + [465.5, 1105.5, 1169.5, 1233.5].map(x => `M${x} 442v3`).join(""));
document.getElementById("prices").innerHTML = ys.map((y, i) => i === 8 ? "" :
  `<text x="1281" y="${y + 4.5}">${(1.164 - i * 0.0005).toFixed(4)}<tspan font-size="7">0</tspan></text>`).join("");

// Candles: [x, high, top, bottom, low, rising]
const candles = [
  [463, 314, 314, 339, 340, 1], [471, 311, 314, 337, 337, 0], [479, 320, 337, 346, 346, 0], [487, 344, 346, 370, 370, 0],
  [495, 355, 370, 381, 381, 0], [503, 375, 382, 401, 401, 0], [511, 379, 379, 403, 405, 1], [519, 365, 365, 378, 391, 1],
  [527, 351, 351, 365, 377, 1], [1095, 227, 227, 253, 253, 0], [1103, 241, 241, 255, 267, 1], [1111, 239, 240, 241, 265, 1],
  [1119, 225, 225, 239, 251, 1], [1127, 222, 225, 248, 248, 0], [1135, 233, 248, 259, 259, 0], [1143, 248, 258, 274, 274, 0],
  [1151, 255, 255, 275, 281, 1], [1159, 233, 233, 251, 259, 1], [1167, 229, 232, 255, 255, 0], [1175, 239, 255, 265, 265, 0],
  [1183, 251, 266, 277, 277, 0], [1191, 255, 255, 278, 281, 1], [1199, 250, 254, 276, 276, 0], [1207, 270, 275, 296, 296, 0]
];
const layer = document.getElementById("candles");
for (const [x, high, top, bottom, low, up] of candles) {
  const p = document.createElementNS(ns, "path");
  p.setAttribute("fill", up ? "#00843a" : "#f15a24");
  p.setAttribute("d", `M${x} ${top}h5v${bottom - top}h-5zM${x + 2} ${high}h1v${low - high}h-1z`);
  layer.append(p);
}
```
